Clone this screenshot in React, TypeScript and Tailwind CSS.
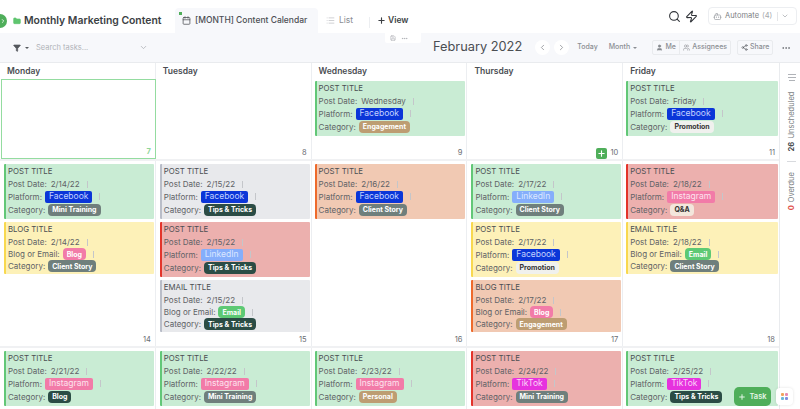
import { Bot, Calendar, ChevronDown, ChevronLeft, ChevronRight, Ellipsis, Filter, Folder, List, Plus, Save, Search, Share2, User, Users, Zap } from "lucide-react";

type Tone = "green" | "yellow" | "red" | "orange" | "gray";

type Post = {
  kind: "POST" | "BLOG" | "EMAIL";
  tone: Tone;
  date: string;
  tag: string;
  category: string;
};

type Cell = { day: number; posts: Post[]; next?: Tone };

const tones: Record<Tone, string> = {
  green: "bg-[#c9ecd4] border-[#62c777]",
  yellow: "bg-[#fdf1b8] border-[#f8d84f]",
  red: "bg-[#ecb0ae] border-[#e3342b]",
  orange: "bg-[#f1c9b3] border-[#ee6a2c]",
  gray: "bg-[#e8e9ec] border-[#b9bdc8]",
};

const tagStyles: Record<string, string> = {
  Facebook: "bg-[#0b36d8] text-[#c3d2ff]",
  LinkedIn: "bg-[#85aefb] text-[#dbe7ff]",
  Instagram: "bg-[#f27ba8] text-[#fde3ee]",
  TikTok: "bg-[#e632de] text-[#fbd5f8]",
  Blog: "bg-[#f27ba8] text-[#fff]",
  Email: "bg-[#5dc974] text-[#fff]",
};

const categoryStyles: Record<string, string> = {
  "Mini Training": "bg-[#6f7f7c] text-white",
  "Client Story": "bg-[#6f7f7c] text-white",
  "Tips & Tricks": "bg-[#2b4c45] text-white",
  Blog: "bg-[#2b4c45] text-white",
  Engagement: "bg-[#bd9d72] text-white",
  Personal: "bg-[#bd9d72] text-white",
  Promotion: "bg-[#f0f1ee] text-[#333]",
  "Q&A": "bg-[#f3e6dc] text-[#333]",
};

const p = (kind: Post["kind"], tone: Tone, date: string, tag: string, category: string): Post => ({ kind, tone, date, tag, category });

const weeks: { height: string; cells: Cell[] }[] = [
  {
    height: "h-[82px]",
    cells: [
      { day: 7, posts: [] },
      { day: 8, posts: [] },
      { day: 9, posts: [p("POST", "green", "Wednesday", "Facebook", "Engagement")] },
      { day: 10, posts: [] },
      { day: 11, posts: [p("POST", "green", "Friday", "Facebook", "Promotion")] },
    ],
  },
  {
    height: "h-[187px]",
    cells: [
      {
        day: 14,
        posts: [
          p("POST", "green", "2/14/22", "Facebook", "Mini Training"),
          p("BLOG", "yellow", "2/14/22", "Blog", "Client Story"),
        ],
      },
      {
        day: 15,
        posts: [
          p("POST", "gray", "2/15/22", "Facebook", "Tips & Tricks"),
          p("POST", "red", "2/15/22", "LinkedIn", "Tips & Tricks"),
          p("EMAIL", "gray", "2/15/22", "Email", "Tips & Tricks"),
        ],
      },
      { day: 16, posts: [p("POST", "orange", "2/16/22", "Facebook", "Client Story")] },
      {
        day: 17,
        posts: [
          p("POST", "green", "2/17/22", "LinkedIn", "Client Story"),
          p("POST", "yellow", "2/17/22", "Facebook", "Promotion"),
          p("BLOG", "orange", "2/17/22", "Blog", "Engagement"),
        ],
      },
      {
        day: 18,
        posts: [
          p("POST", "red", "2/18/22", "Instagram", "Q&A"),
          p("EMAIL", "yellow", "2/18/22", "Email", "Client Story"),
        ],
      },
    ],
  },
  {
    height: "h-[61px]",
    cells: [
      { day: 21, posts: [p("POST", "green", "2/21/22", "Instagram", "Blog")], next: "green" },
      { day: 22, posts: [p("POST", "green", "2/22/22", "Instagram", "Mini Training")], next: "green" },
      { day: 23, posts: [p("POST", "green", "2/23/22", "Instagram", "Personal")], next: "yellow" },
      { day: 24, posts: [p("POST", "red", "2/24/22", "TikTok", "Mini Training")], next: "gray" },
      { day: 25, posts: [p("POST", "green", "2/25/22", "TikTok", "Tips & Tricks")], next: "orange" },
    ],
  },
];

const Divider = () => <span className="ml-[7px] h-[7px] w-px bg-[#c4c6ca]" />;

const PostCard = ({ post }: { post: Post }) => {
  const isPost = post.kind === "POST";
  const rowH = isPost ? "h-[13px]" : "h-[12px]";

  return (
    <div className={`${tones[post.tone]} ${isPost ? "h-[55px]" : "h-[52px]"} shrink-0 rounded-[1px] border-l-2 pl-[2px] pt-px text-[8px] leading-none text-[#5f6266]`}>
      <div className="flex h-[13px] items-center text-[7.8px] text-[#4b4e52]">{post.kind} TITLE</div>
      <div className="flex h-[12px] items-center">
        <span>Post Date:</span>
        <span className="ml-[4px]">{post.date}</span>
        <Divider />
      </div>
      <div className={`flex ${rowH} items-center`}>
        <span>{isPost ? "Platform:" : "Blog or Email:"}</span>
        {isPost ? (
          <span className={`${tagStyles[post.tag]} ml-[3px] flex h-[12px] items-center rounded-[2px] px-[4px] text-[8.5px]`}>{post.tag}</span>
        ) : (
          <span className={`${tagStyles[post.tag]} ml-[3px] flex h-[12px] items-center rounded-[4px] px-[4px] text-[7px] font-bold`}>{post.tag}</span>
        )}
        <Divider />
      </div>
      <div className={`flex ${rowH} items-center`}>
        <span>Category:</span>
        <span className={`${categoryStyles[post.category]} ml-[3px] flex h-[12px] items-center rounded-[4px] px-[4px] text-[7px] font-bold`}>{post.category}</span>
      </div>
    </div>
  );
};

const DayCell = ({ cell, column, firstWeek }: { cell: Cell; column: number; firstWeek: boolean }) => {
  const isToday = cell.day === 7;
  const edge = isToday ? "ml-px border border-[#94dca0]" : column === 4 ? "" : "border-r border-[#eceef1]";
  const inset = column === 2 || column === 4 ? "pl-[3px]" : "pl-[4px]";

  return (
    <div className={`relative flex flex-col gap-[3px] overflow-hidden pr-px ${firstWeek ? "pt-[2px]" : "pt-[3px]"} ${inset} ${edge}`}>
      {cell.posts.map((post, idx) => (
        <PostCard key={idx} post={post} />
      ))}
      {cell.next && <div className={`${tones[cell.next]} h-px shrink-0 border-l-2`} />}
      {cell.day < 21 && (
        <div className={`absolute bottom-0 right-[4px] flex items-center gap-[3px] text-[7.5px] leading-[12px] ${isToday ? "font-bold text-[#8fd69a]" : "text-[#6a6d72]"}`}>
          {cell.day === 10 && (
            <span className="flex size-[11px] items-center justify-center rounded-[2px] bg-[#4fae5a]">
              <Plus size={9} strokeWidth={3} className="text-white" />
            </span>
          )}
          {cell.day}
        </div>
      )}
    </div>
  );
};

export default function App() {
  return (
    <div className="relative flex h-[409px] w-[800px] flex-col overflow-hidden bg-white font-['Inter',sans-serif]">
      {/* top bar */}
      <header className="flex h-[33px] shrink-0 items-end pl-[13px] pr-[3px]">
        <div className="flex h-[25px] w-[162px] items-center gap-[3px]">
          <Folder size={8} className="fill-[#5fc56f] text-[#5fc56f]" />
          <span className="whitespace-nowrap text-[10.4px] font-semibold text-[#3c3f44]">Monthly Marketing Content</span>
        </div>
        <div className="flex h-[25px] w-[143px] items-center gap-[4px] rounded-t-[4px] bg-[#f7f8fb] pl-[7px] text-[8.5px] font-medium text-[#4c4f54]">
          <Calendar size={9} className="text-[#4c4f54]" />
          <span>[MONTH] Content Calendar</span>
        </div>
        <div className="ml-[8px] flex h-[25px] w-[43px] items-center gap-[4px] text-[8.5px] text-[#8b8e93]">
          <List size={9} className="text-[#c0c2c6]" />
          <span>List</span>
        </div>
        <span className="mb-[5px] h-[11px] w-px bg-[#eceef1]" />
        <div className="ml-[7px] flex h-[25px] items-center gap-[2px] text-[8.5px] font-semibold text-[#3c3f44]">
          <Plus size={9} strokeWidth={3} />
          <span>View</span>
        </div>
        <div className="ml-auto flex h-[33px] items-center gap-[4px] pb-[1px]">
          <Search size={13} strokeWidth={2} className="text-[#303338]" />
          <Zap size={13} strokeWidth={2} className="text-[#303338]" />
          <div className="ml-[6px] flex h-[18px] w-[89px] items-center rounded-[4px] border border-[#eceef1] pl-[4px] text-[7.5px] text-[#7c7f84]">
            <Bot size={9} className="mr-[3px] text-[#a0a3a8]" />
            <span>Automate</span>
            <span className="ml-[3px] text-[#a5a8ac]">(4)</span>
            <span className="ml-[5px] h-[9px] w-px bg-[#e4e5e8]" />
            <ChevronDown size={8} className="ml-[3px] text-[#a0a3a8]" />
          </div>
        </div>
      </header>

      {/* toolbar */}
      <div className="relative flex h-[30px] shrink-0 items-center border-b border-[#e9ebee] bg-[#f7f8fb] pl-[13px] pr-[9px]">
        <div className="flex w-[420px] shrink-0 items-center">
          <Filter size={8} className="fill-[#55585d] text-[#55585d]" />
          <span className="ml-[4px] h-0 w-0 border-x-[2px] border-t-[2px] border-x-transparent border-t-[#55585d]" />
          <span className="ml-[7px] w-[103px] text-[7.5px] text-[#b0b3b8]">Search tasks...</span>
          <ChevronDown size={9} className="text-[#a9acb1]" />
        </div>
        <span className="whitespace-nowrap text-[12.8px] leading-none text-[#4a4d52]">February 2022</span>
        <span className="ml-[13px] flex size-[15px] shrink-0 items-center justify-center rounded-full bg-white">
          <ChevronLeft size={9} className="text-[#85888d]" />
        </span>
        <span className="ml-[4px] flex size-[15px] shrink-0 items-center justify-center rounded-full bg-white">
          <ChevronRight size={9} className="text-[#85888d]" />
        </span>
        <span className="ml-[8px] text-[7px] font-medium text-[#8b8e93]">Today</span>
        <span className="ml-[11px] flex items-center gap-[3px] text-[7px] font-medium text-[#8b8e93]">
          Month
          <span className="h-0 w-0 border-x-[2px] border-t-[2px] border-x-transparent border-t-[#8b8e93]" />
        </span>
        <div className="ml-[15px] flex h-[15px] w-[79px] shrink-0 items-center rounded-[2px] border border-[#e9ebee] bg-[#f7f8fb] text-[7px] font-medium text-[#8b8e93]">
          <span className="flex h-full w-[27px] items-center justify-center gap-[2px] border-r border-[#e9ebee]">
            <User size={7} className="fill-[#85888d] text-[#85888d]" />
            Me
          </span>
          <span className="flex flex-1 items-center justify-center gap-[2px]">
            <Users size={7} />
            Assignees
          </span>
        </div>
        <div className="ml-[6px] flex h-[15px] w-[36px] shrink-0 items-center justify-center gap-[2px] rounded-[2px] border border-[#e9ebee] text-[7px] font-medium text-[#8b8e93]">
          <Share2 size={7} className="text-[#55585d]" />
          Share
        </div>
        <Ellipsis size={10} className="ml-auto text-[#6a6d72]" />
      </div>

      {/* calendar */}
      <div className="flex min-h-0 flex-1">
        <div className="w-[780px] shrink-0 border-r border-[#e9ebee]">
          <div className="grid h-[16px] grid-cols-5 text-[8.5px] font-semibold text-[#4a4d52]">
            {["Monday", "Tuesday", "Wednesday", "Thursday", "Friday"].map((name) => (
              <div key={name} className="flex items-center border-r border-[#eceef1] pl-[7px] last:border-r-0">
                {name}
              </div>
            ))}
          </div>
          {weeks.map((week, weekIdx) => (
            <div key={week.cells[0].day} className={`grid ${week.height} grid-cols-5 border-b-2 border-[#f0f1f3] last:border-b-0`}>
              {week.cells.map((cell, idx) => (
                <DayCell key={cell.day} cell={cell} column={idx} firstWeek={weekIdx === 0} />
              ))}
            </div>
          ))}
        </div>

        <aside className="flex flex-1 flex-col items-center pl-[3px] pt-[11px] text-[7.5px] text-[#7c7f84]">
          <span className="h-px w-[8px] bg-[#b0b3b8]" />
          <span className="mt-[2px] h-px w-[8px] bg-[#b0b3b8]" />
          <span className="mt-[2px] h-px w-[6px] bg-[#b0b3b8]" />
          <div className="mt-[11px] flex rotate-180 items-center gap-[3px] whitespace-nowrap [writing-mode:vertical-rl]">
            <span className="font-bold text-[#45484b]">26</span>
            <span>Unscheduled</span>
          </div>
          <span className="mt-[10px] h-px w-[9px] bg-[#d8dade]" />
          <div className="mt-[10px] flex rotate-180 items-center gap-[3px] whitespace-nowrap [writing-mode:vertical-rl]">
            <span className="font-bold text-[#e0524a]">0</span>
            <span>Overdue</span>
          </div>
        </aside>
      </div>

      {/* overlays */}
      <span className="absolute left-[-7px] top-[14px] flex size-[14px] items-center justify-end rounded-full bg-[#4fae5a] pr-px">
        <ChevronRight size={6} strokeWidth={3} className="text-white" />
      </span>
      <span className="absolute left-[179px] top-[12px] size-[3px] bg-[#4fae5a]" />
      <div className="absolute left-[385px] top-[33px] flex h-[10px] w-[36px] items-center gap-[5px] rounded-b-[2px] bg-white pl-[5px]">
        <Save size={6} className="text-[#a0a3a8]" />
        <Ellipsis size={7} className="text-[#a0a3a8]" />
      </div>
      <div className="absolute left-[734px] top-[387px] flex h-[19px] w-[37px] items-center justify-center gap-[3px] rounded-[5px] bg-[#4fae5a] text-[7.5px] font-semibold text-[#e4f5e6]">
        <Plus size={8} strokeWidth={3} />
        Task
      </div>
      <div className="absolute left-[776px] top-[388px] grid size-[17px] grid-cols-[3px_3px] place-content-center gap-px rounded-[4px] bg-white shadow-[0_0_3px_rgba(0,0,0,0.12)]">
        <span className="size-[3px] rounded-[1px] bg-[#f0a45d]" />
        <span className="size-[3px] rounded-[1px] bg-[#e88bb3]" />
        <span className="size-[3px] rounded-[1px] bg-[#6bb8d8]" />
        <span className="size-[3px] rounded-[1px] bg-[#7f8ee0]" />
      </div>
    </div>
  );
}
